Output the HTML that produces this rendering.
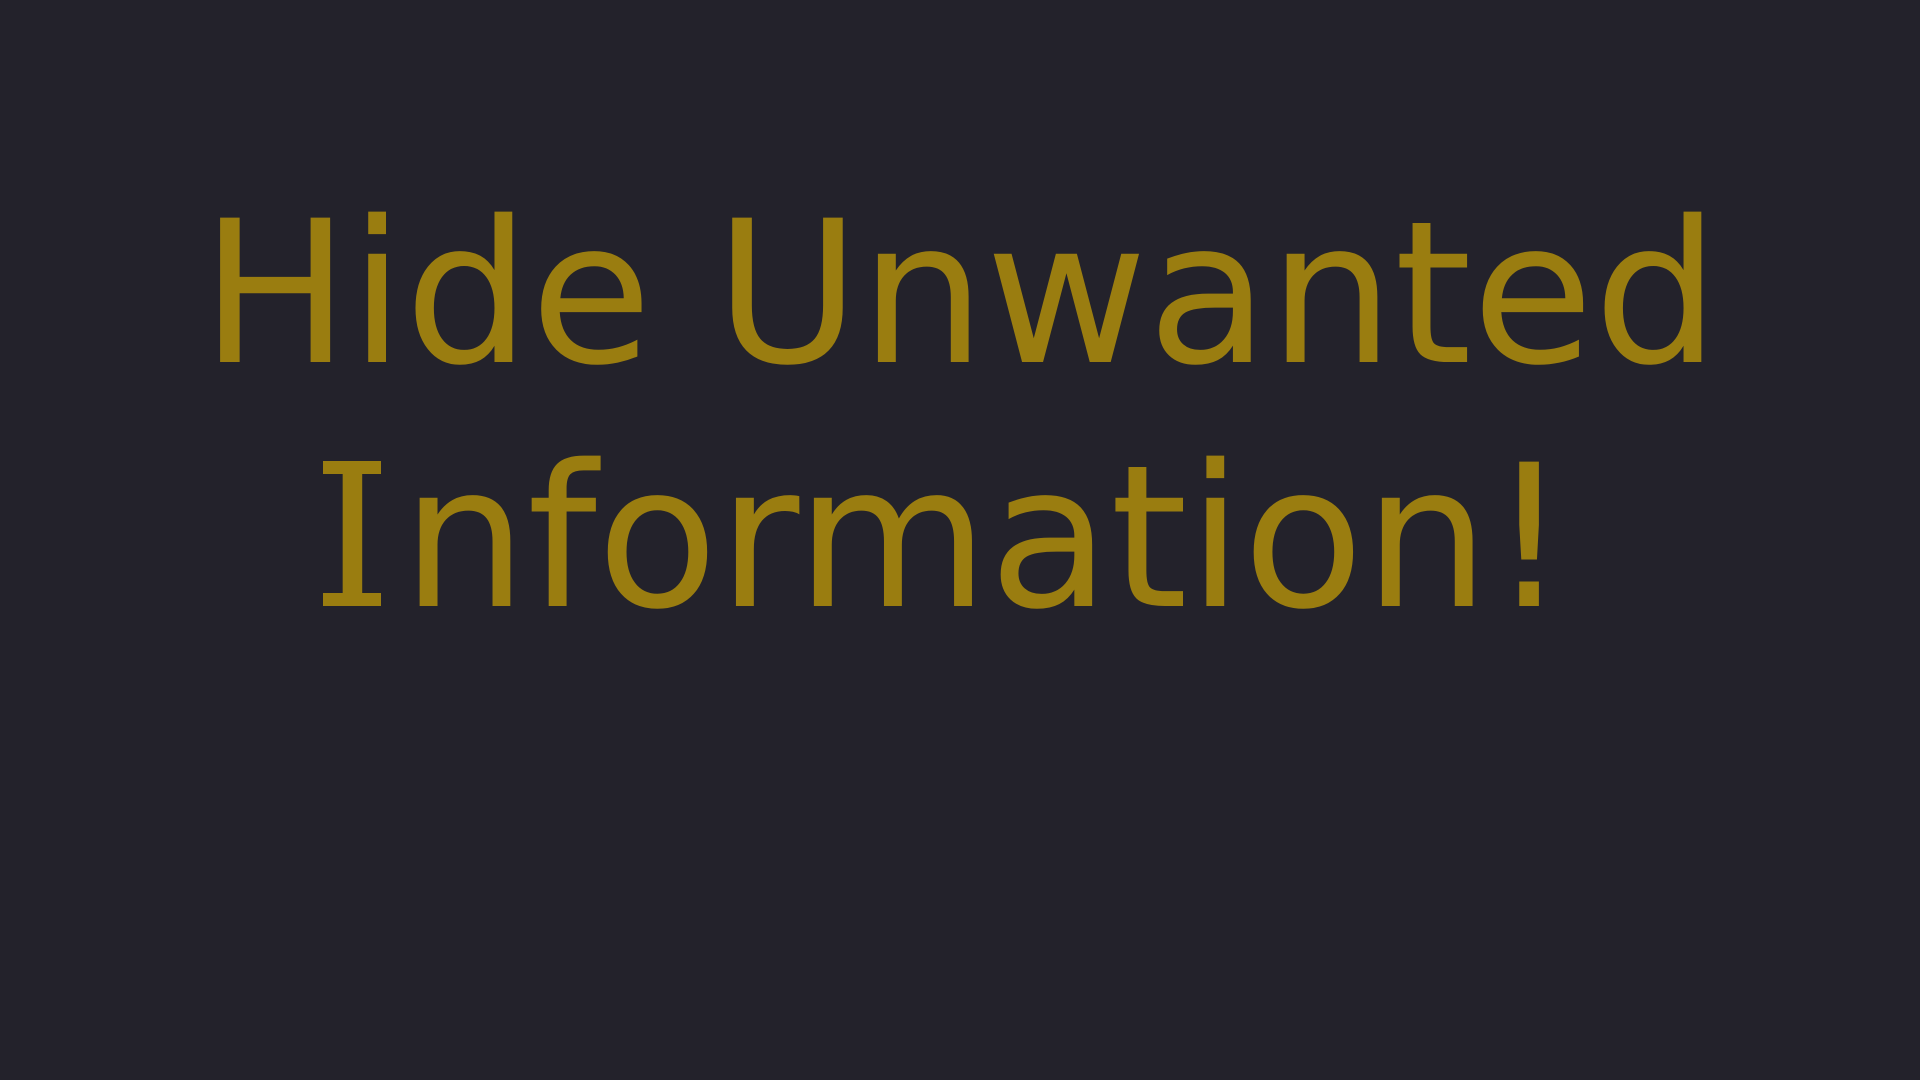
<!DOCTYPE html>
<html><head><meta charset="utf-8"><style>
html,body{margin:0;padding:0;width:1920px;height:1080px;background:#23222b;overflow:hidden}
.t{position:absolute;left:0;top:172px;width:1920px;text-align:center;font-family:"DejaVu Sans",sans-serif;font-size:198px;line-height:244px;color:#9a7d10}
.l2{position:relative;left:-24px}
.i{position:relative;padding:0 20px}
.i::before,.i::after{content:"";position:absolute;left:20px;width:58px;height:13px;background:#9a7d10}
.i::before{top:39px}
.i::after{top:171px}
</style></head><body>
<div class="t">Hide Unwanted<br><span class="l2"><span class="i">I</span>nformation!</span></div>
</body></html>
